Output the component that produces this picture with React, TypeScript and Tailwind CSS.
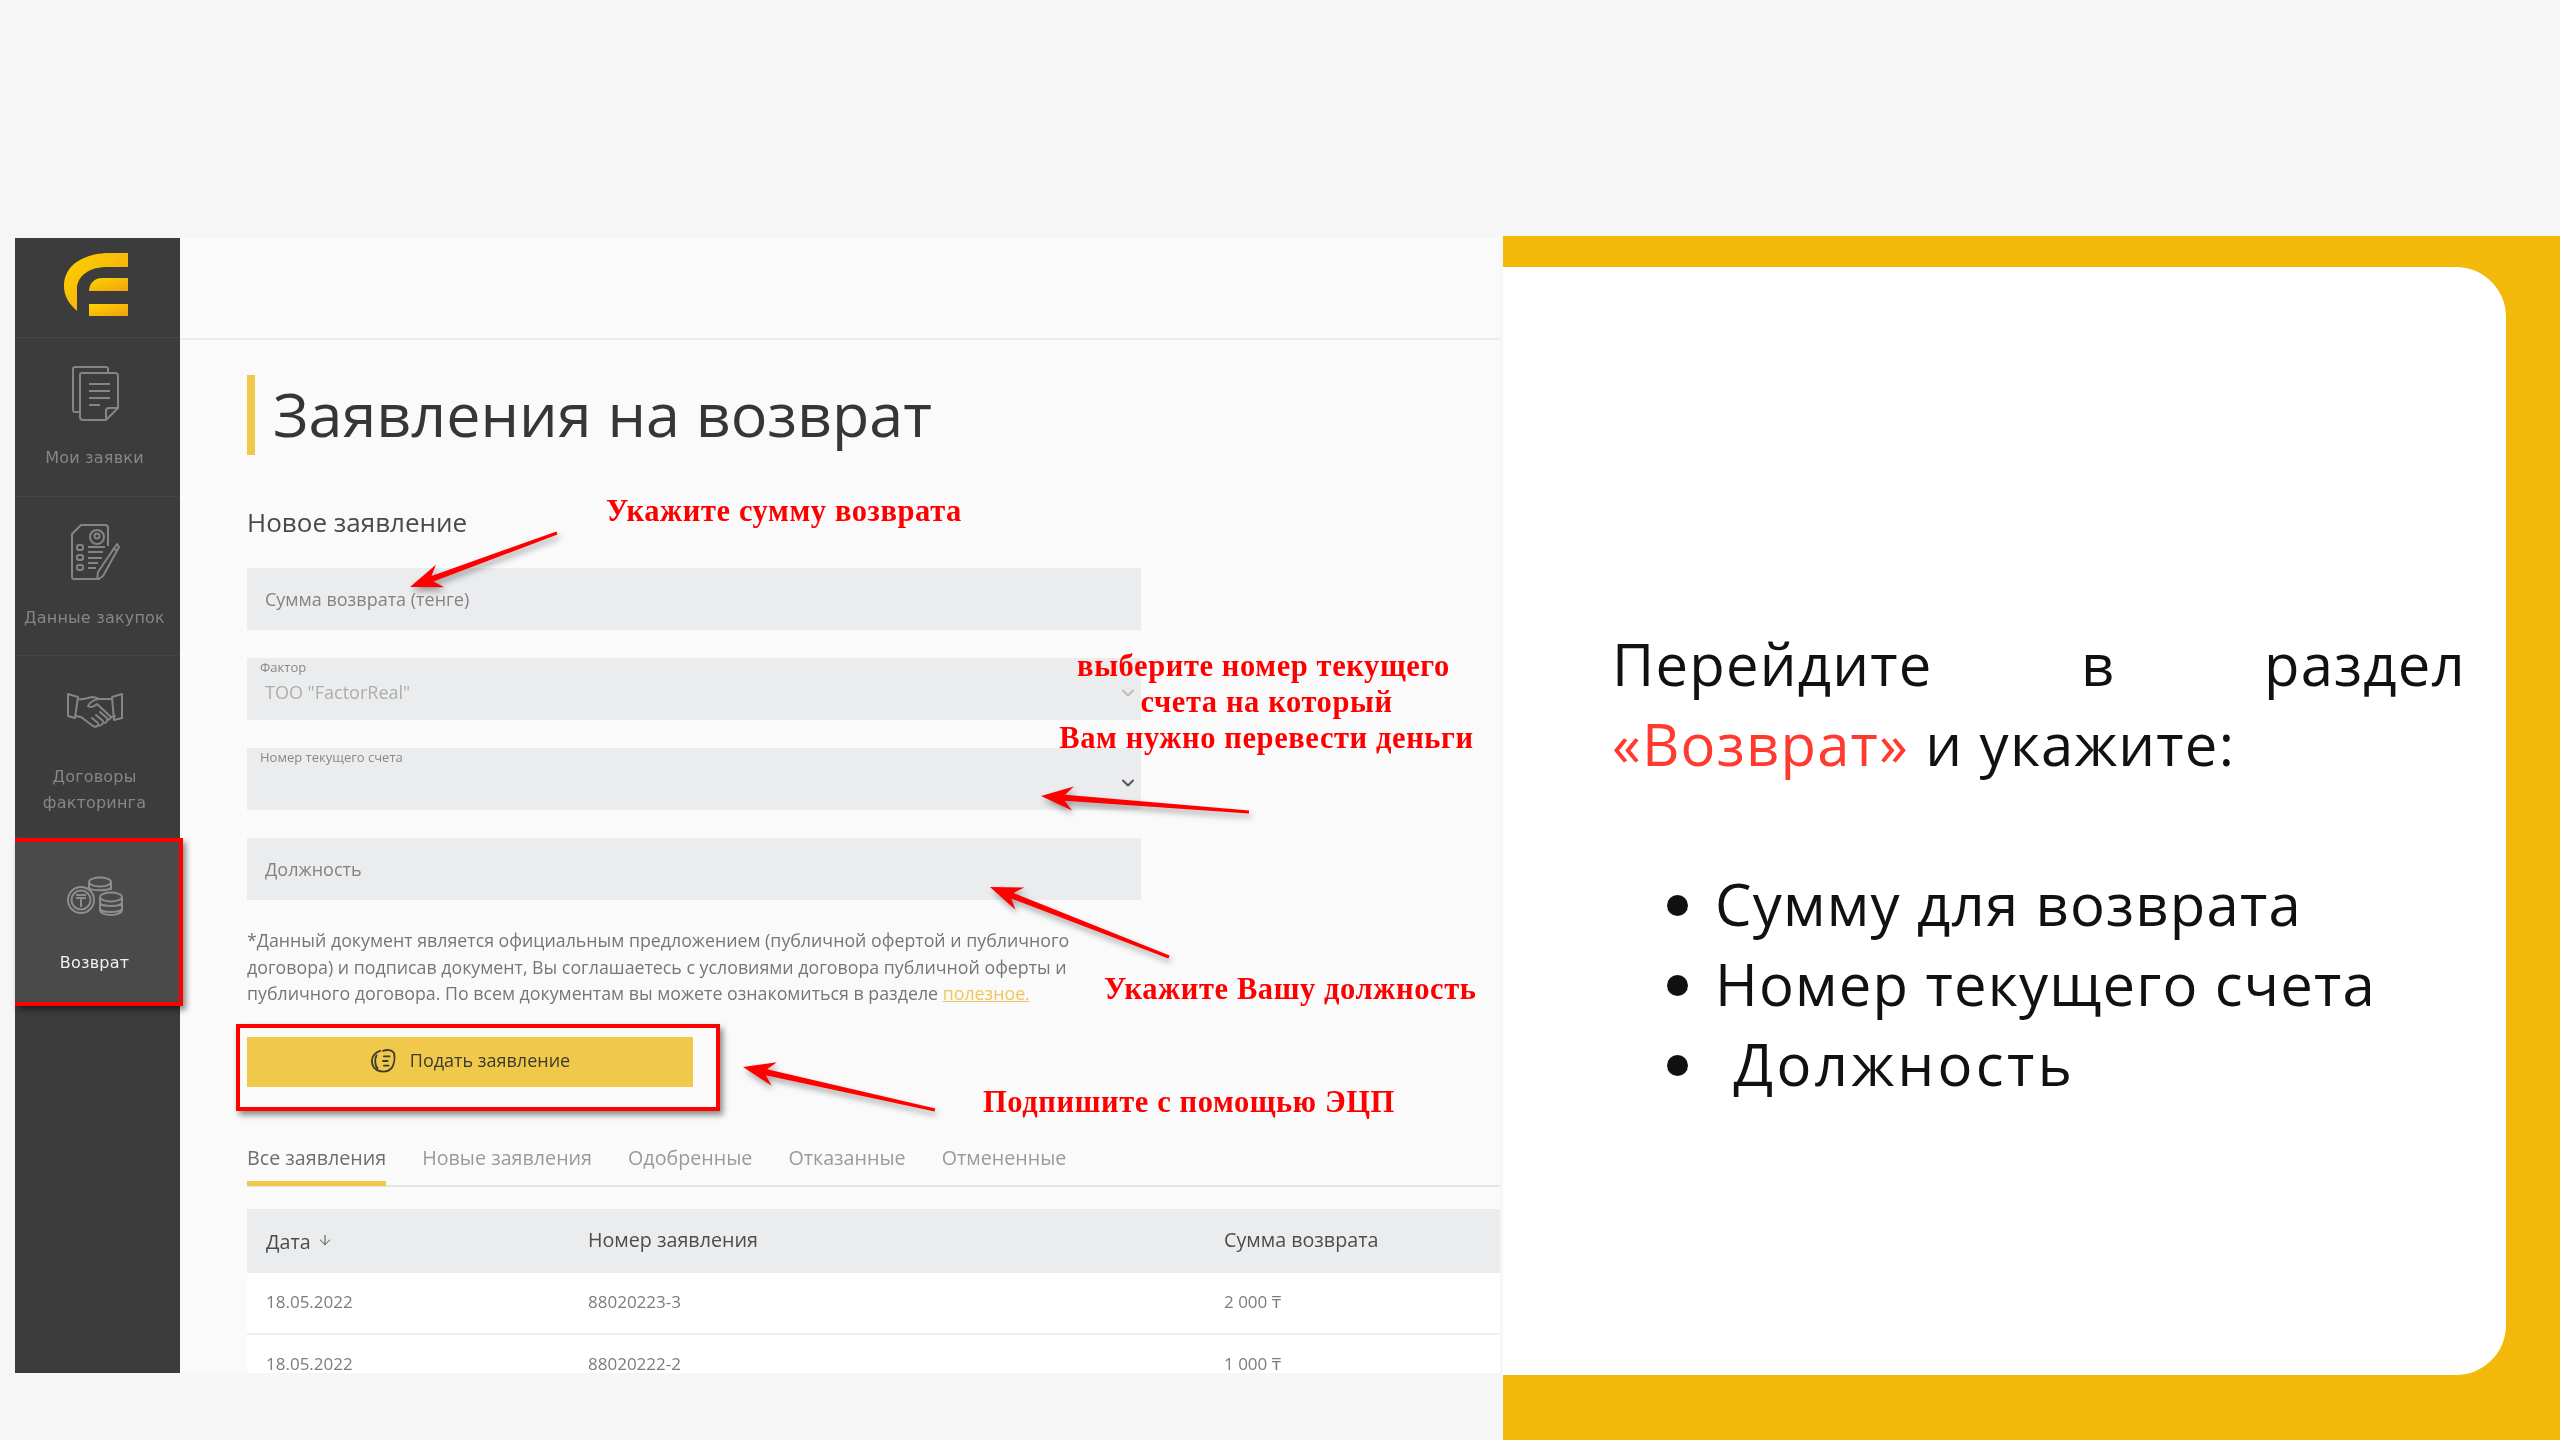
import { ArrowDown, ChevronDown } from "lucide-react";

const ui = "font-['Open_Sans','Noto_Sans',sans-serif]";
const note = "font-['Liberation_Serif',serif] font-bold text-[#ff0000] text-[30.5px] leading-[36px] tracking-[0.6px] whitespace-nowrap";

function Logo() {
  return (
    <svg viewBox="0 0 64 64" className="w-[64px] h-[64px]">
      <defs>
        <linearGradient id="lg" x1="0" y1="0" x2="1" y2="1">
          <stop offset="0" stopColor="#ffd400" />
          <stop offset="1" stopColor="#f0a010" />
        </linearGradient>
      </defs>
      <path fill="url(#lg)" d="M64 0H46C20 0 0 12 0 33c0 10 5 18 13 25V36c0-13 12-22 30-22h21z" />
      <path fill="url(#lg)" d="M64 25H38c-8 0-13 6-13 13h39z" />
      <path fill="url(#lg)" d="M25 51h39v12H25z" />
    </svg>
  );
}

function DocsIcon() {
  return (
    <svg viewBox="0 0 48 56" className="w-[48px] h-[56px]" fill="none" stroke="#858585" strokeWidth="2" strokeLinejoin="round">
      <path d="M37 6V3a2 2 0 0 0-2-2H4a2 2 0 0 0-2 2v41a2 2 0 0 0 2 2h5" />
      <path d="M11 7h33a3 3 0 0 1 3 3v32L35 54H12a3 3 0 0 1-3-3V9a2 2 0 0 1 2-2z" />
      <path d="M47 42H38a3 3 0 0 0-3 3v9" />
      <path d="M18 18h21M18 25h21M18 32h21M18 39h11" />
    </svg>
  );
}

function DataIcon() {
  return (
    <svg viewBox="0 0 50 56" className="w-[50px] h-[56px]" fill="none" stroke="#858585" strokeWidth="2" strokeLinejoin="round">
      <path d="M38 22V4a3 3 0 0 0-3-3H11L2 10v43a2 2 0 0 0 2 2h26" />
      <circle cx="27" cy="13" r="7" />
      <circle cx="27" cy="12" r="2.5" />
      <rect x="7" y="21" width="6" height="5" rx="2" />
      <rect x="7" y="31" width="6" height="5" rx="2" />
      <rect x="7" y="41" width="6" height="5" rx="2" />
      <path d="M18 23h17M18 28h15M18 34h14M18 39h10M18 44h8" />
      <path d="M47 20l2 3-16 29-6 4 1-8z" />
      <path d="M43 24l4 3" />
    </svg>
  );
}

function HandshakeIcon() {
  return (
    <svg viewBox="0 0 56 38" className="w-[56px] h-[38px]" fill="none" stroke="#858585" strokeWidth="2" strokeLinejoin="round" strokeLinecap="round">
      <path d="M1 3l10 3-3 21-7-2z" />
      <path d="M55 3l-10 3 2 23 8-2z" />
      <path d="M11 8c5 1 9-1 14-2 3 0 5 1 7 2l13 0" />
      <path d="M32 8c-4 0-9 3-11 7 3 2 6 1 9-2l14 13" />
      <path d="M9 25l5 1 12 9c2 1 4 1 5-1 2 1 4 0 5-2 2 0 4-1 4-3 2 0 4-2 4-3l4-1" />
      <path d="M25 27l6 5M29 24l7 6M33 21l7 6" />
    </svg>
  );
}

function CoinsIcon() {
  return (
    <svg viewBox="0 0 56 40" className="w-[56px] h-[40px]" fill="none" stroke="#8d8d8d" strokeWidth="2">
      <ellipse cx="33" cy="6" rx="11" ry="4.5" />
      <path d="M22 6v12M44 6v8M22 12c2 3 19 3 22 0" />
      <ellipse cx="44" cy="21" rx="11" ry="4.5" />
      <path d="M33 21v13c0 3 5 5 11 5s11-2 11-5V21M33 27c2 4 20 4 22 0M33 33c2 4 20 4 22 0" />
      <circle cx="14" cy="24" r="13" fill="#4a4a4a" />
      <circle cx="14" cy="24" r="9.5" />
      <path d="M9 19h10M9 22h10M14 22v9" />
    </svg>
  );
}

function SignIcon() {
  return (
    <svg viewBox="0 0 28 28" className="w-[26px] h-[26px]" fill="none" stroke="#3c3a30" strokeWidth="2" strokeLinecap="round">
      <path d="M14 3c6-2 11 0 12 3 1 5 0 12-3 16-3 3-8 4-12 3-6-1-9-6-9-11C2 9 6 4 11 3" />
      <path d="M7 8c-2 4-2 10 1 14" />
      <path d="M15 9h6M14 14h5M15 19h5" />
    </svg>
  );
}

function NavItem({ icon, label, cls, gap, active }: { icon: React.ReactNode; label: string[]; cls: string; gap: string; active?: boolean }) {
  return (
    <div className={`${cls} pr-[6px] flex flex-col items-center border-b border-[#444444] ${active ? "bg-[#4a4a4a] text-[#efefef]" : "text-[#868686]"}`}>
      {icon}
      <div className={`${gap} text-center text-[16px] leading-[26px] tracking-[0.2px] font-['DejaVu_Sans',sans-serif] whitespace-nowrap`}>
        {label.map((l) => (
          <div key={l}>{l}</div>
        ))}
      </div>
    </div>
  );
}

function Arrow({ x1, y1, x2, y2 }: { x1: number; y1: number; x2: number; y2: number }) {
  const len = Math.hypot(x2 - x1, y2 - y1);
  const ux = (x2 - x1) / len;
  const uy = (y2 - y1) / len;
  const nx = -uy;
  const ny = ux;
  const head = 30;
  const bx = x2 - ux * head;
  const by = y2 - uy * head;
  const pts = [
    [x1 + nx * 1.6, y1 + ny * 1.6],
    [bx + ux * 6 + nx * 3, by + uy * 6 + ny * 3],
    [bx - ux * 2 + nx * 12, by - uy * 2 + ny * 12],
    [x2, y2],
    [bx - ux * 2 - nx * 12, by - uy * 2 - ny * 12],
    [bx + ux * 6 - nx * 3, by + uy * 6 - ny * 3],
    [x1 - nx * 1.6, y1 - ny * 1.6],
  ];
  return <polygon points={pts.map((p) => p.join(",")).join(" ")} fill="#ff0000" />;
}

function Field({ label, value, chevron, children }: { label?: string; value?: string; chevron?: string; children?: React.ReactNode }) {
  return (
    <div className="relative h-[62px] w-[894px] bg-[#ebecee]">
      {label && <div className="pl-[13px] pt-[1px] text-[13px] leading-[17px] text-[#888888]">{label}</div>}
      {value && <div className="pl-[18px] pt-[3px] text-[18px] leading-[26px] text-[#adadad]">{value}</div>}
      {children}
      {chevron && <ChevronDown strokeWidth={2.5} className={`absolute right-[3px] top-[25px] w-[20px] h-[20px] ${chevron}`} />}
    </div>
  );
}

const tabs = ["Новые заявления", "Одобренные", "Отказанные", "Отмененные"];

function Row({ date, num, sum }: { date: string; num: string; sum: string }) {
  return (
    <div className="flex h-[62px] shrink-0 items-center bg-white border-b-[2px] border-[#efefef] text-[17px] text-[#7c7c7c] pb-[3px]">
      <div className="w-[341px] pl-[19px]">{date}</div>
      <div className="w-[636px]">{num}</div>
      <div>{sum}</div>
    </div>
  );
}

export default function App() {
  return (
    <main className={`flex w-[2560px] h-[1440px] overflow-hidden bg-[#f6f6f6] ${ui}`}>
      <div className="relative w-[1503px] h-[1440px] pl-[15px] pt-[238px] blur-[0.7px]">
        <div className="flex w-[1485px] h-[1135px] overflow-hidden bg-[#fafafa]">
          <aside className="w-[165px] shrink-0 bg-[#3c3c3c]">
            <div className="h-[100px] flex justify-center pt-[15px] pr-[4px] border-b border-[#444444]">
              <Logo />
            </div>
            <NavItem cls="h-[159px] pt-[28px]" gap="mt-[23px]" icon={<DocsIcon />} label={["Мои заявки"]} />
            <NavItem cls="h-[159px] pt-[27px]" gap="mt-[25px]" icon={<DataIcon />} label={["Данные закупок"]} />
            <NavItem cls="h-[182px] pt-[35px]" gap="mt-[35px]" icon={<HandshakeIcon />} label={["Договоры", "факторинга"]} />
            <NavItem cls="h-[168px] pt-[38px]" gap="mt-[34px]" active icon={<CoinsIcon />} label={["Возврат"]} />
          </aside>

          <section className="flex-1 flex flex-col min-w-0">
            <div className="h-[102px] shrink-0 border-b-[2px] border-[#ebebeb]" />
            <div className="pl-[67px] pt-[35px]">
              <h1 className="h-[80px] border-l-[8px] border-[#f0c94b] pl-[18px] text-[61px] leading-[78px] text-[#363636] whitespace-nowrap">Заявления на возврат</h1>
              <h2 className="mt-[49px] h-[37px] text-[26px] leading-[36px] text-[#4a4a4a]">Новое заявление</h2>
              <div className="mt-[27px] flex flex-col gap-[28px]">
                <Field>
                  <div className="pl-[18px] pt-[18px] text-[18px] leading-[26px] text-[#838383]">Сумма возврата (тенге)</div>
                </Field>
                <Field label="Фактор" value='ТОО "FactorReal"' chevron="text-[#bdbdbd]" />
                <Field label="Номер текущего счета" chevron="text-[#555555]" />
                <Field>
                  <div className="pl-[18px] pt-[18px] text-[18px] leading-[26px] text-[#838383]">Должность</div>
                </Field>
              </div>
              <p className="mt-[27px] w-[840px] text-[17.8px] leading-[26.5px] text-[#767676] whitespace-nowrap">
                *Данный документ является официальным предложением (публичной офертой и публичного
                <br />
                договора) и подписав документ, Вы соглашаетесь с условиями договора публичной оферты и
                <br />
                публичного договора. По всем документам вы можете ознакомиться в разделе{" "}
                <span className="text-[#eec65a] underline">полезное.</span>
              </p>
              <button className="mt-[30px] flex h-[50px] w-[446px] items-center justify-center gap-[14px] bg-[#f0c94b] pb-[2px] text-[18px] text-[#3c3a30]">
                <SignIcon />
                Подать заявление
              </button>
              <div className="mt-[47.5px] flex h-[53px] gap-[36px] border-b-[2px] border-[#e6e6e6] text-[19.7px] leading-[48px] text-[#9a9a9a] whitespace-nowrap">
                <div className="h-[52px] border-b-[5px] border-[#f0c94b] text-[#6e6e6e]">Все заявления</div>
                {tabs.map((t) => (
                  <div key={t}>{t}</div>
                ))}
              </div>
              <div className="mt-[22px] flex flex-col">
                <div className="flex h-[64px] shrink-0 items-center bg-[#ebecee] pb-[2px] text-[19.7px] text-[#4c4c4c]">
                  <div className="flex w-[341px] items-center gap-[6px] pl-[19px] pt-[4px]">
                    Дата
                    <ArrowDown strokeWidth={1.5} className="mb-[4px] w-[16px] h-[16px]" />
                  </div>
                  <div className="w-[636px]">Номер заявления</div>
                  <div>Сумма возврата</div>
                </div>
                <Row date="18.05.2022" num="88020223-3" sum="2 000 ₸" />
                <Row date="18.05.2022" num="88020222-2" sum="1 000 ₸" />
              </div>
            </div>
          </section>
        </div>

        {/* annotations drawn over the screenshot */}
        <svg className="absolute left-0 top-0 w-[1503px] h-[1440px] drop-shadow-[2px_4px_3px_rgba(0,0,0,0.35)]" viewBox="0 0 1503 1440">
          <Arrow x1={557} y1={533} x2={410} y2={587} />
          <Arrow x1={1249} y1={812} x2={1041} y2={796} />
          <Arrow x1={1169} y1={957} x2={990} y2={887} />
          <Arrow x1={935} y1={1110} x2={743} y2={1067} />
        </svg>
        <div className="absolute left-[15px] top-[838px] w-[168px] h-[168px] border-[4px] border-l-0 border-[#ff0000] shadow-[3px_4px_6px_rgba(0,0,0,0.45)]" />
        <div className="absolute left-[236px] top-[1024px] w-[484px] h-[87px] border-[4px] border-[#ff0000] shadow-[3px_4px_6px_rgba(0,0,0,0.45)]" />
        <div className={`absolute left-[606px] top-[493px] ${note}`}>Укажите сумму возврата</div>
        <div className={`absolute left-[1060px] top-[648px] w-[413px] flex flex-col items-center ${note}`}>
          <span className="mr-[6px]">выберите номер текущего</span>
          <span>счета на который</span>
          <span>Вам нужно перевести деньги</span>
        </div>
        <div className={`absolute left-[1104px] top-[971px] ${note}`}>Укажите Вашу должность</div>
        <div className={`absolute left-[983px] top-[1084px] ${note}`}>Подпишите с помощью ЭЦП</div>
      </div>

      <div className="mt-[236px] flex-1 h-[1204px] bg-[#f2b90b] pt-[31px] pr-[54px]">
        <div className="h-[1108px] rounded-r-[50px] bg-white pl-[109px] pr-[40px] pt-[357px] text-[#111111] text-[58px] leading-[80px] tracking-[1.2px]">
          <p className="text-justify [text-align-last:justify]">Перейдите в раздел</p>
          <p>
            <span className="text-[#ff3b30]">«Возврат»</span> и укажите:
          </p>
          <ul className="mt-[80px] list-disc pl-[103px]">
            <li>Сумму для возврата</li>
            <li>Номер текущего счета</li>
            <li className="whitespace-pre tracking-[3.4px]"> Должность</li>
          </ul>
        </div>
      </div>
    </main>
  );
}
